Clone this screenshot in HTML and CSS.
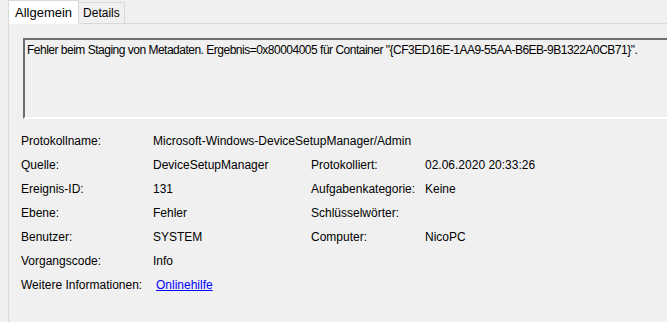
FILE: index.html
```html
<html>
  <head>
    <meta name="viewport" content="width=device-width,initial-scale=1">
    <title>Ereigniseigenschaften</title>
    <link rel="stylesheet" href="styles.css">
  </head>
  <body>
    <div class="tabs">
      <div class="tab active">Allgemein</div>
      <div class="tab">Details</div>
    </div>
    <div class="panel">
      <div class="message">Fehler beim Staging von Metadaten. Ergebnis=0x80004005 für Container "{CF3ED16E-1AA9-55AA-B6EB-9B1322A0CB71}".</div>
      <div class="info-grid">
        <div>Protokollname:</div>
        <div class="wide">Microsoft-Windows-DeviceSetupManager/Admin</div>

        <div>Quelle:</div>
        <div>DeviceSetupManager</div>
        <div>Protokolliert:</div>
        <div>02.06.2020 20:33:26</div>

        <div>Ereignis-ID:</div>
        <div>131</div>
        <div>Aufgabenkategorie:</div>
        <div>Keine</div>

        <div>Ebene:</div>
        <div>Fehler</div>
        <div>Schlüsselwörter:</div>
        <div></div>

        <div>Benutzer:</div>
        <div>SYSTEM</div>
        <div>Computer:</div>
        <div>NicoPC</div>

        <div>Vorgangscode:</div>
        <div class="wide">Info</div>

        <div>Weitere Informationen:</div>
        <div class="wide"><a href="#" class="link">Onlinehilfe</a></div>
      </div>
    </div>
  </body>
</html>
```

FILE: styles.css
```css
:root {
    --face: #f0f0f0;
    --tab-border: #d9d9d9;
    --text: #000000;
    --link: #0000ff;
}

html, body {
    margin: 0;
    padding: 0;
    width: 100%;
    height: 100%;
    overflow: hidden;
}

body {
    background-color: var(--face);
    color: var(--text);
    font-family: "Liberation Sans", Arial, sans-serif;
    font-size: 12px;
}

/* Tab strip */
.tabs {
    display: flex;
    align-items: flex-end;
    height: 23px;
    padding-left: 8px;
}

.tab {
    box-sizing: border-box;
    height: 21px;
    padding: 3px 4px 0 4px;
    border: 1px solid var(--tab-border);
    border-bottom: none;
    margin-left: -1px;
}

.tab.active {
    height: 24px;
    margin-bottom: -1px;
    margin-left: 0;
    padding: 4px 6px 0 6px;
    background-color: #ffffff;
    position: relative;
    z-index: 1;
    font-size: 13px;
}

/* Page */
.panel {
    height: 294px;
    margin-left: 8px;
    padding: 14px 0 0 12px;
    border-top: 1px solid var(--tab-border);
    border-left: 1px solid var(--tab-border);
    border-bottom: 4px solid #ffffff;
}

.message {
    box-sizing: border-box;
    width: 650px;
    height: 81px;
    margin-left: 2px;
    padding: 3px 2px;
    border-style: solid;
    border-width: 2px;
    border-color: #6d6d6d #ffffff #ffffff #6d6d6d;
    letter-spacing: -0.5px;
    white-space: nowrap;
}

.info-grid {
    display: grid;
    grid-template-columns: 132px 158px 114px auto;
    grid-auto-rows: 24px;
    align-items: center;
    margin-top: 10px;
}

.info-grid .wide {
    grid-column: span 3;
}

.link {
    color: var(--link);
    margin-left: 3px;
}
```
